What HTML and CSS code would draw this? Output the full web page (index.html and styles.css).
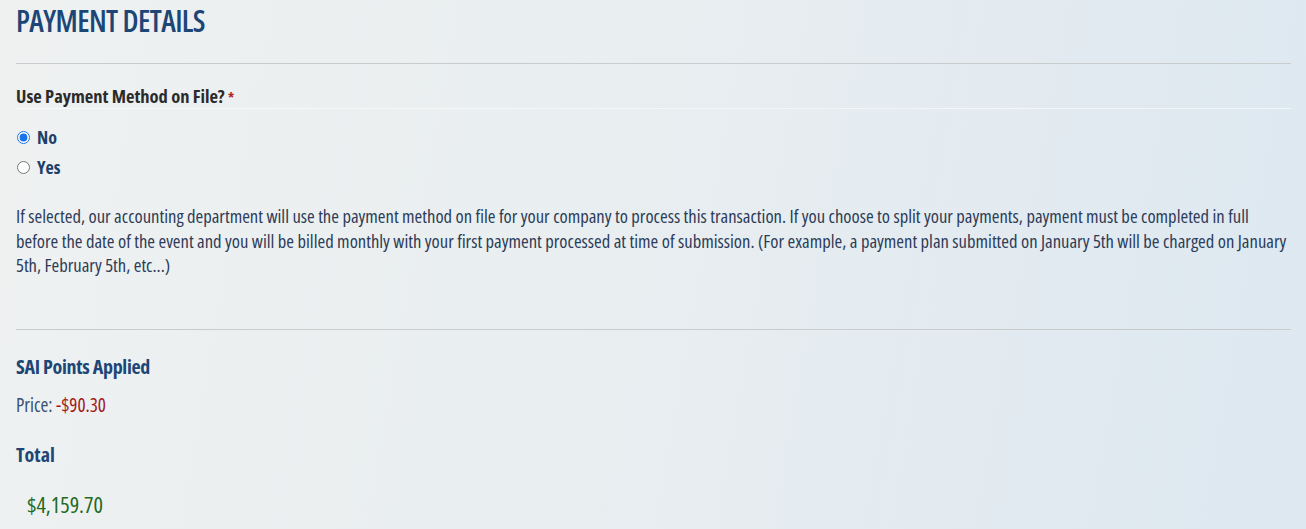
FILE: index.html
```html
<!DOCTYPE html>
<html lang="en">
<head>
  <meta charset="UTF-8" />
  <title>Payment Details</title>
  <link rel="stylesheet" href="styles.css">
</head>
<body>

  <div class="payment">
    <h1>PAYMENT DETAILS</h1>
    <hr />

    <div class="field">
      <div class="field-label">Use Payment Method on File? <span class="req">*</span></div>
      <label class="choice"><input type="radio" name="onfile" checked /> No</label>
      <label class="choice"><input type="radio" name="onfile" /> Yes</label>
    </div>

    <p class="note">If selected, our accounting department will use the payment method on file for your company to process this transaction. If you choose to split your payments, payment must be completed in full before the date of the event and you will be billed monthly with your first payment processed at time of submission. (For example, a payment plan submitted on January 5th will be charged on January 5th, February 5th, etc...)</p>

    <hr class="gap" />

    <h3 class="points">SAI Points Applied</h3>
    <div class="price">Price: <span class="minus">-$90.30</span></div>

    <h3 class="total">Total</h3>
    <div class="total-amount">$4,159.70</div>
  </div>

</body>
</html>
```
FILE: styles.css
```css
body {
  margin: 0;
  padding: 0;
  font-family: "Open Sans", sans-serif;
  font-stretch: 75%;
  background: linear-gradient(100deg, #eff1f1 0%, #e9eef0 45%, #dde8f1 100%);
  min-height: 529px;
  overflow: hidden;
}
.payment {
  padding: 3px 15px 0 16px;
}
h1 {
  margin: 0;
  font-size: 30px;
  line-height: 36px;
  font-weight: 600;
  letter-spacing: -0.6px;
  color: #1c4676;
}
hr {
  margin: 24px 0 0;
  border: none;
  border-top: 1px solid #c9cccd;
  height: 0;
}
.field-label {
  margin-top: 20px;
  font-size: 18.5px;
  line-height: 24px;
  font-weight: 700;
  color: #2b2b2b;
  border-bottom: 1px solid rgba(255,255,255,0.55);
  height: 24px;
  margin-bottom: 13px;
}
.req {
  color: #b3261e;
  font-size: 14px;
}
.choice {
  display: flex;
  align-items: center;
  height: 30px;
  font-size: 18px;
  font-weight: 700;
  color: #1c3f6b;
}
.choice input {
  margin: 0 7px 0 1px;
  width: 13px;
  height: 13px;
  accent-color: #1a73e8;
}
.note {
  margin: 22px 0 0;
  font-size: 18.6px;
  line-height: 24.5px;
  color: #2d3c58;
}
hr.gap {
  margin-top: 51px;
}
.points {
  margin: 24px 0 0;
  font-size: 20px;
  line-height: 26px;
  font-weight: 700;
  letter-spacing: -0.3px;
  color: #1c4676;
}
.price {
  margin-top: 13px;
  font-size: 19px;
  line-height: 24px;
  color: #3a5273;
}
.minus {
  color: #a3161a;
}
.total {
  margin: 25px 0 0;
  font-size: 20px;
  line-height: 26px;
  font-weight: 700;
  color: #1c4676;
}
.total-amount {
  margin-top: 22px;
  padding-left: 11px;
  font-size: 22.2px;
  line-height: 30px;
  color: #1f6a22;
}
```
